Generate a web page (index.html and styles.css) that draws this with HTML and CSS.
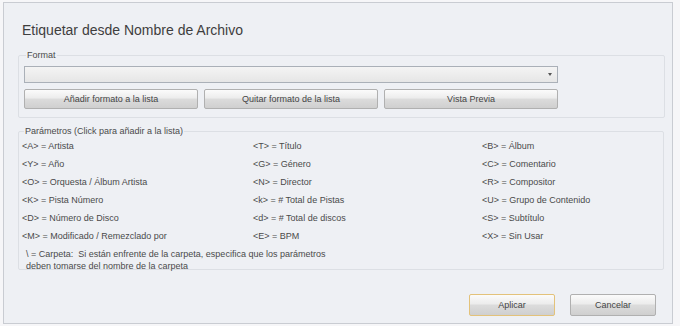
FILE: index.html
```html
<!DOCTYPE html>
<html lang="es">
<head>
    <meta charset="UTF-8">
    <title>Etiquetar desde Nombre de Archivo</title>
    <link rel="stylesheet" href="styles.css">
</head>
<body>
    <div class="window">
        <h1 class="title">Etiquetar desde Nombre de Archivo</h1>

        <fieldset class="group format">
            <legend>Format</legend>
            <div class="combo">
                <span class="arrow"></span>
            </div>
            <div class="actions">
                <button class="btn">Añadir formato a la lista</button>
                <button class="btn">Quitar formato de la lista</button>
                <button class="btn">Vista Previa</button>
            </div>
        </fieldset>

        <fieldset class="group params">
            <legend>Parámetros (Click para añadir a la lista)</legend>
            <div class="param-grid">
                <span>&lt;A&gt; = Artista</span>
                <span>&lt;T&gt; = Título</span>
                <span>&lt;B&gt; = Álbum</span>
                <span>&lt;Y&gt; = Año</span>
                <span>&lt;G&gt; = Género</span>
                <span>&lt;C&gt; = Comentario</span>
                <span>&lt;O&gt; = Orquesta / Álbum Artista</span>
                <span>&lt;N&gt; = Director</span>
                <span>&lt;R&gt; = Compositor</span>
                <span>&lt;K&gt; = Pista Número</span>
                <span>&lt;k&gt; = # Total de Pistas</span>
                <span>&lt;U&gt; = Grupo de Contenido</span>
                <span>&lt;D&gt; = Número de Disco</span>
                <span>&lt;d&gt; = # Total de discos</span>
                <span>&lt;S&gt; = Subtítulo</span>
                <span>&lt;M&gt; = Modificado / Remezclado por</span>
                <span>&lt;E&gt; = BPM</span>
                <span>&lt;X&gt; = Sin Usar</span>
            </div>
            <p class="note">\ = Carpeta:&nbsp; Si están enfrente de la carpeta, especifica que los parámetros<br>deben tomarse del nombre de la carpeta</p>
        </fieldset>

        <div class="footer">
            <button class="btn btn-default">Aplicar</button>
            <button class="btn">Cancelar</button>
        </div>
    </div>
</body>
</html>
```

FILE: styles.css
```css
body {
    margin: 0;
    width: 680px;
    height: 326px;
    background: #f6f6f8;
    font-family: "Liberation Sans", Arial, sans-serif;
    font-size: 9px;
    color: #4a4a4a;
    overflow: hidden;
}
.window {
    box-sizing: border-box;
    width: 670px;
    height: 322px;
    margin: 2px 0 0 3px;
    border: 1px solid #c9ccd2;
    background: #eef0f4;
    padding: 17px 0 0 14px;
}
.title {
    margin: 0 0 0 4px;
    font-size: 14px;
    font-weight: normal;
    color: #3e3e3e;
    line-height: 20px;
}
.group {
    margin: 0;
    border: 1px solid #dcdfe4;
    border-radius: 2px;
    width: 646px;
    box-sizing: border-box;
}
.group legend {
    padding: 0 1px;
    margin-left: 2px;
    line-height: 10px;
    color: #4a4a4a;
}
.format {
    margin-top: 10px;
    height: 68px;
    padding: 6px 106px 0 5px;
}
.combo {
    position: relative;
    height: 17px;
    box-sizing: border-box;
    border: 1px solid #aab0b8;
    background: linear-gradient(#f4f4f4, #e6e6e6);
}
.arrow {
    position: absolute;
    right: 5px;
    top: 6px;
    border-left: 2.5px solid transparent;
    border-right: 2.5px solid transparent;
    border-top: 3px solid #555;
}
.actions {
    display: flex;
    gap: 6px;
    margin-top: 6px;
}
.btn {
    box-sizing: border-box;
    width: 174px;
    height: 20px;
    padding: 0;
    border: 1px solid #b0b0b0;
    border-radius: 2px;
    background: linear-gradient(#fbfbfb 0%, #ececec 45%, #dcdcdc 50%, #cfcfcf 100%);
    font-family: "Liberation Sans", Arial, sans-serif;
    font-size: 9px;
    color: #444;
}
.params {
    margin-top: 8px;
    height: 144px;
    padding: 1px 0 0 3px;
}
.param-grid {
    display: grid;
    grid-template-columns: 231px 229px 1fr;
    grid-auto-rows: 18px;
    align-items: center;
}
.note {
    margin: 3px 0 0 4px;
    line-height: 12px;
}
.footer {
    display: flex;
    justify-content: flex-end;
    gap: 15px;
    padding: 24px 16px 0 0;
}
.footer .btn {
    width: 86px;
    height: 22px;
}
.btn-default {
    border-color: #e3c27a;
}
```
